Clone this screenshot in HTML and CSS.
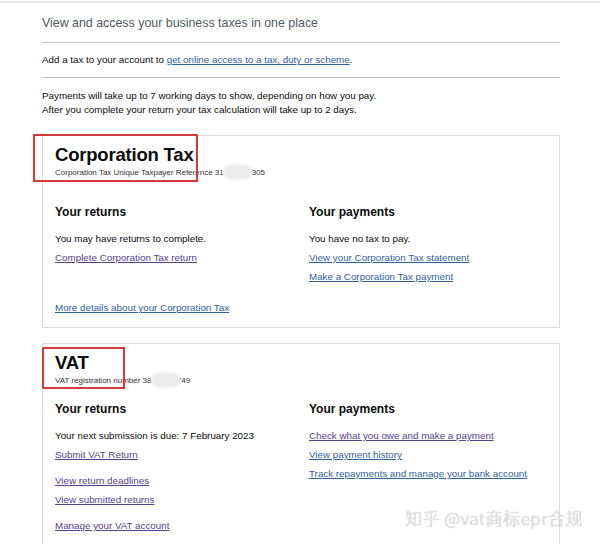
FILE: index.html
```html
<!DOCTYPE html>
<html lang="en">
<head>
<meta charset="utf-8">
<title>Business tax account</title>
<link rel="stylesheet" href="styles.css">
</head>
<body>
<div class="topline"></div>
<main class="page">
  <h1 class="lead">View and access your business taxes in one place</h1>
  <p class="add">Add a tax to your account to <a class="link" href="#">get online access to a tax, duty or scheme</a>.</p>
  <div class="notes">
    <p>Payments will take up to 7 working days to show, depending on how you pay.</p>
    <p>After you complete your return your tax calculation will take up to 2 days.</p>
  </div>

  <section class="card ct">
    <div class="mark mark-ct"></div>
    <h2 class="title">Corporation Tax</h2>
    <p class="ref">Corporation Tax Unique Taxpayer Reference 31<span class="blur"></span>305</p>
    <div class="cols">
      <div class="col">
        <h3 class="sub">Your returns</h3>
        <p class="txt">You may have returns to complete.</p>
        <a class="link visited" href="#">Complete Corporation Tax return</a>
      </div>
      <div class="col">
        <h3 class="sub">Your payments</h3>
        <p class="txt">You have no tax to pay.</p>
        <a class="link" href="#">View your Corporation Tax statement</a>
        <a class="link" href="#">Make a Corporation Tax payment</a>
      </div>
    </div>
    <a class="link more" href="#">More details about your Corporation Tax</a>
  </section>

  <section class="card vat">
    <div class="mark mark-vat"></div>
    <h2 class="title">VAT</h2>
    <p class="ref">VAT registration number 38<span class="blur"></span>’49</p>
    <div class="cols">
      <div class="col">
        <h3 class="sub">Your returns</h3>
        <p class="txt">Your next submission is due: 7 February 2023</p>
        <a class="link visited" href="#">Submit VAT Return</a>
        <a class="link visited gap" href="#">View return deadlines</a>
        <a class="link visited" href="#">View submitted returns</a>
        <a class="link visited gap" href="#">Manage your VAT account</a>
      </div>
      <div class="col">
        <h3 class="sub">Your payments</h3>
        <a class="link visited first" href="#">Check what you owe and make a payment</a>
        <a class="link" href="#">View payment history</a>
        <a class="link" href="#">Track repayments and manage your bank account</a>
      </div>
    </div>
  </section>
</main>
<div class="watermark">知乎 @vat商标epr合规</div>
</body>
</html>
```

FILE: styles.css
```css
html, body {
  margin: 0;
  padding: 0;
  background: #fff;
}
body {
  font-family: "Liberation Sans", Arial, sans-serif;
  color: #0b0c0c;
  position: relative;
  height: 544px;
  overflow: hidden;
}
.topline {
  margin-top: 1px;
  height: 2px;
  background: #e4e4e4;
}
.page {
  margin-left: 42px;
  width: 518px;
}
p { margin: 0; }
.lead {
  margin: 0;
  padding: 12px 0 11px;
  font-size: 12.4px;
  font-weight: normal;
  color: #505a5f;
  line-height: 16px;
  border-bottom: 1px solid #c8c8c8;
}
.add {
  font-size: 9.8px;
  line-height: 12px;
  padding: 11px 0 11px;
  border-bottom: 1px solid #bdbdbd;
}
.notes {
  padding-top: 11px;
  font-size: 9.8px;
  line-height: 14px;
}
.link {
  color: #2f62a0;
  text-decoration: underline;
  text-underline-offset: 1px;
}
.link.visited { color: #54428e; }
.card {
  position: relative;
  border: 1px solid #dadada;
  padding: 8px 12px 12px;
}
.ct { margin-top: 18px; }
.vat { margin-top: 15px; padding-bottom: 30px; }
.mark {
  position: absolute;
  border: 2px solid #d43a3a;
}
.mark-ct { left: -10px; top: -2px; width: 161px; height: 44px; }
.mark-vat { left: -1px; top: 3px; width: 79px; height: 38px; }
.title {
  margin: 0;
  font-size: 18.5px;
  font-weight: bold;
  line-height: 22px;
  letter-spacing: -0.2px;
}
.ref {
  font-size: 8px;
  line-height: 10px;
  color: #333;
}
.blur {
  display: inline-block;
  width: 26px;
  height: 12px;
  margin: 0 1px -3px;
  border-radius: 6px;
  background: #ececec;
  box-shadow: 0 0 3px 2px #f0f0f0;
}
.cols {
  display: grid;
  grid-template-columns: 254px 1fr;
}
.ct .cols { margin-top: 26px; }
.vat .cols { margin-top: 15px; }
.col {
  display: flex;
  flex-direction: column;
  align-items: flex-start;
  font-size: 9.8px;
  line-height: 12px;
}
.sub {
  margin: 0 0 13px;
  font-size: 12px;
  line-height: 16px;
  font-weight: bold;
}
.txt { margin-bottom: 7px; }
.col .link { margin-bottom: 7px; }
.col .link.gap { margin-top: 7px; }
.more {
  display: inline-block;
  margin-top: 12px;
  font-size: 9.8px;
  line-height: 12px;
}
.watermark {
  position: absolute;
  left: 405px;
  top: 505px;
  font-family: "Noto Sans CJK SC", "Liberation Sans", sans-serif;
  font-size: 17px;
  font-weight: 300;
  color: #e6e6e6;
  text-shadow: 0 0 1px #aaa;
  letter-spacing: 0.6px;
}
```
